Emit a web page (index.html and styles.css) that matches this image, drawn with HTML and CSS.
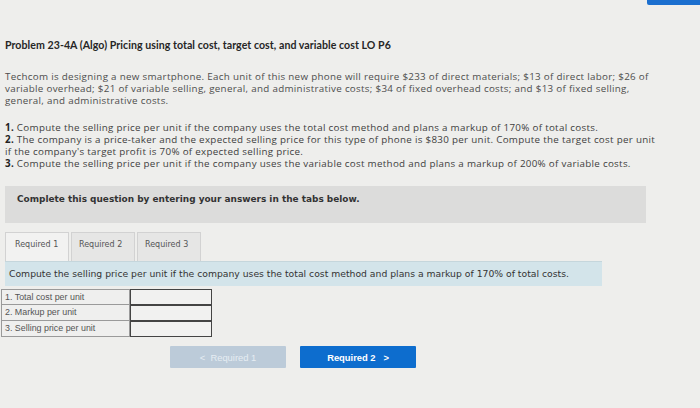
FILE: index.html
```html
<!DOCTYPE html>
<html>
<head>
<meta charset="utf-8">
<link rel="stylesheet" href="styles.css">
</head>
<body>
<div class="topbar"><div class="topbtn"></div></div>
<main class="page">
  <h1 class="title">Problem 23-4A (Algo) Pricing using total cost, target cost, and variable cost LO P6</h1>
  <p class="intro">Techcom is designing a new smartphone. Each unit of this new phone will require $233 of direct materials; $13 of direct labor; $26 of<br>variable overhead; $21 of variable selling, general, and administrative costs; $34 of fixed overhead costs; and $13 of fixed selling,<br>general, and administrative costs.</p>
  <div class="reqs">
    <div class="req"><b>1.</b> Compute the selling price per unit if the company uses the total cost method and plans a markup of 170% of total costs.</div>
    <div class="req"><b>2.</b> The company is a price-taker and the expected selling price for this type of phone is $830 per unit. Compute the target cost per unit<br>if the company's target profit is 70% of expected selling price.</div>
    <div class="req"><b>3.</b> Compute the selling price per unit if the company uses the variable cost method and plans a markup of 200% of variable costs.</div>
  </div>
  <div class="notice">Complete this question by entering your answers in the tabs below.</div>
  <div class="tabs">
    <div class="tab active">Required 1</div>
    <div class="tab">Required 2</div>
    <div class="tab">Required 3</div>
  </div>
  <div class="instr">Compute the selling price per unit if the company uses the total cost method and plans a markup of 170% of total costs.</div>
  <div class="grid">
    <div class="lbl">1. Total cost per unit</div><div class="inp"></div>
    <div class="lbl">2. Markup per unit</div><div class="inp"></div>
    <div class="lbl">3. Selling price per unit</div><div class="inp"></div>
  </div>
  <div class="nav">
    <div class="btn prev">&lt;&nbsp;&nbsp;Required 1</div>
    <div class="btn next">Required 2&nbsp;&nbsp;&nbsp;&gt;</div>
  </div>
</main>
</body>
</html>
```

FILE: styles.css
```css
html, body { margin: 0; padding: 0; }
body {
  width: 700px; height: 408px; overflow: hidden;
  background: #eeeeec;
  font-family: "Open Sans", "Liberation Sans", sans-serif;
  color: #3a3a3a;
}
.topbar { display: flex; justify-content: flex-end; height: 5px; }
.topbtn { width: 53px; height: 5px; background: #1b6fcf; border-bottom-left-radius: 2px; }
.page { padding: 0 0 0 5px; }
.title {
  margin: 32px 0 0 0; font-family: Lato, sans-serif; font-size: 10.6px; font-weight: 700; color: #262626;
  line-height: 16px; letter-spacing: 0.05px;
}
.intro {
  margin: 18px 0 0 0; font-size: 9.8px; line-height: 12px; color: #4d4d4d; letter-spacing: 0.3px;
}
.reqs { margin-top: 15px; font-size: 9.8px; line-height: 12px; color: #3e3e3e; letter-spacing: 0.3px; }
.req b { color: #222; }
.notice {
  margin-top: 16px; width: 641px; height: 37px; box-sizing: border-box;
  padding: 8px 0 0 12px;
  background: #dcdcdb;
  font-family: "DejaVu Sans", sans-serif; font-weight: 700; font-size: 8.95px; color: #333;
}
.tabs { display: flex; gap: 2px; margin-top: 9px; height: 29px; }
.tab {
  width: 64px; box-sizing: border-box; border: 1px solid #d2d2d2; border-bottom: none;
  background: #e6e6e5;
  font-family: "DejaVu Sans", sans-serif; font-size: 8px; color: #555;
  padding: 7px 0 0 9px;
}
.tab.active { background: #f2f2f1; }
.tab + .tab { padding-left: 7px; }
.instr {
  width: 597px; height: 25px; box-sizing: border-box;
  background: #d3e4ea; border-top: 1px solid #c5d6dc;
  font-family: "DejaVu Sans", sans-serif; font-size: 9.25px; color: #333;
  padding: 6px 0 0 4px;
}
.grid {
  margin: 3px 0 0 -4px; display: grid; grid-template-columns: 129px 82px; width: 211px;
}
.lbl {
  height: 16px; box-sizing: border-box; border: 1px solid #9a9a9a; border-top: none;
  font-family: "Liberation Sans", sans-serif; font-size: 8.9px; color: #555;
  padding: 2px 0 0 3px; background: #efefee;
}
.lbl:first-child { border-top: 1px solid #9a9a9a; }
.inp {
  height: 16px; box-sizing: border-box; border: 1.5px solid #444; background: #f1f1f0;
}
.nav { display: flex; gap: 14px; margin: 9px 0 0 165px; }
.btn {
  width: 116px; height: 22px; box-sizing: border-box; border-radius: 1px;
  display: flex; align-items: center; justify-content: center;
  font-family: "Liberation Sans", sans-serif; font-size: 9.4px; font-weight: 700;
}
.prev { background: #bccbd9; color: #e6edf3; font-weight: 400; }
.next { background: #0d6dce; color: #fff; }
```
